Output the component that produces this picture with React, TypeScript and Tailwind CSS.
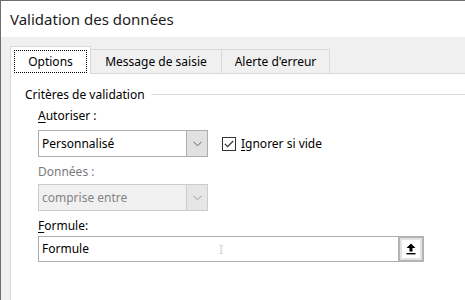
import React from "react";

const font = { fontFamily: '"Noto Sans", "Open Sans", sans-serif' };

function Chevron({ color = "#606060" }: { color?: string }) {
  return (
    <svg width="9" height="6" viewBox="0 0 9 6">
      <path d="M0.5 0.8 L4.5 4.8 L8.5 0.8" fill="none" stroke={color} strokeWidth="1" />
    </svg>
  );
}

function Select({ value, disabled }: { value: string; disabled?: boolean }) {
  return (
    <div
      className={`flex h-[27px] w-[170px] border ${
        disabled ? "border-[#cccccc] bg-[#f0f0f0] text-[#838383]" : "border-[#adadad] bg-white text-black"
      }`}
    >
      <div className="flex flex-1 items-center pl-[3px] text-[12px]">{value}</div>
      <div
        className={`flex w-[21px] items-center justify-center border-l ${
          disabled ? "border-[#cccccc] bg-[#e6e6e6]" : "border-[#adadad] bg-[#e1e1e1]"
        }`}
      >
        <Chevron color={disabled ? "#9a9a9a" : "#606060"} />
      </div>
    </div>
  );
}

export default function App() {
  return (
    <div
      className="relative flex h-[300px] w-[465px] flex-col overflow-hidden border-l border-t border-[#6e6e6e] bg-[#f0f0f0] text-black"
      style={font}
    >
      <div className="flex h-[36px] items-center bg-white pl-[9px] text-[15px] text-[#1b1b1b]">
        Validation des données
      </div>
      <div className="flex flex-1 flex-col pl-[9px] pt-[9px]">
        <div className="flex items-end text-[12px]">
          <div className="relative z-10 -mb-px flex h-[28px] w-[81px] items-stretch border border-b-0 border-[#d9d9d9] bg-white p-[3px] pb-[1px]">
            <div className="flex flex-1 items-center justify-center border border-dotted border-[#000]">
              Options
            </div>
          </div>
          <div className="flex h-[24px] w-[131px] items-center justify-center border-r border-t border-[#d9d9d9]">
            Message de saisie
          </div>
          <div className="flex h-[24px] w-[108px] items-center justify-center border-r border-t border-[#d9d9d9]">
            Alerte d'erreur
          </div>
        </div>
        <div className="flex flex-1 flex-col border-l border-t border-[#d9d9d9] bg-white pl-[14px] pt-[12px] text-[12px]">
          <div className="flex items-center">
            <span className="leading-[17px]">Critères de validation</span>
            <div className="ml-[6px] h-px flex-1 bg-[#dcdcdc]" />
          </div>
          <div className="flex flex-col pl-[13px]">
            <div className="mt-[4px] leading-[17px]">
              <span className="underline underline-offset-2">A</span>utoriser :
            </div>
            <div className="mt-[6px] flex items-center">
              <Select value="Personnalisé" />
              <div className="ml-[14px] flex items-center">
                <div className="flex h-[14px] w-[14px] items-center justify-center border border-[#333333] bg-white">
                  <svg width="10" height="8" viewBox="0 0 10 8">
                    <path d="M0.8 3.8 L3.6 6.6 L9.2 1" fill="none" stroke="#333" strokeWidth="1.2" />
                  </svg>
                </div>
                <span className="ml-[5px]">
                  <span className="underline underline-offset-2">I</span>gnorer si vide
                </span>
              </div>
            </div>
            <div className="mt-[6px] leading-[17px] text-[#7a7a7a]">Données :</div>
            <div className="mt-[4px]">
              <Select value="comprise entre" disabled />
            </div>
            <div className="mt-[6px] leading-[17px]">
              <span className="underline underline-offset-2">F</span>ormule:
            </div>
            <div className="mt-[2px] flex h-[26px] w-[386px] border border-[#adadad] bg-white">
              <div className="relative flex flex-1 items-center pl-[3px]">
                Formule
                <span className="absolute left-[180px] top-[4px] text-[13px] leading-[16px] text-[#d4d4d4]">I</span>
              </div>
              <div className="flex w-[26px] items-center justify-center border-2 border-[#b4b4b4] bg-[#e3e3e3] p-[2px] -my-px -mr-px">
                <div className="flex h-full w-full items-center justify-center bg-white">
                  <svg width="10" height="12" viewBox="0 0 10 12">
                    <path d="M5 0.5 L9.5 5 L6.5 5 L6.5 8.5 L3.5 8.5 L3.5 5 L0.5 5 Z" fill="#000" />
                    <rect x="0.5" y="10" width="9" height="1.4" fill="#000" />
                  </svg>
                </div>
              </div>
            </div>
          </div>
        </div>
      </div>
    </div>
  );
}
